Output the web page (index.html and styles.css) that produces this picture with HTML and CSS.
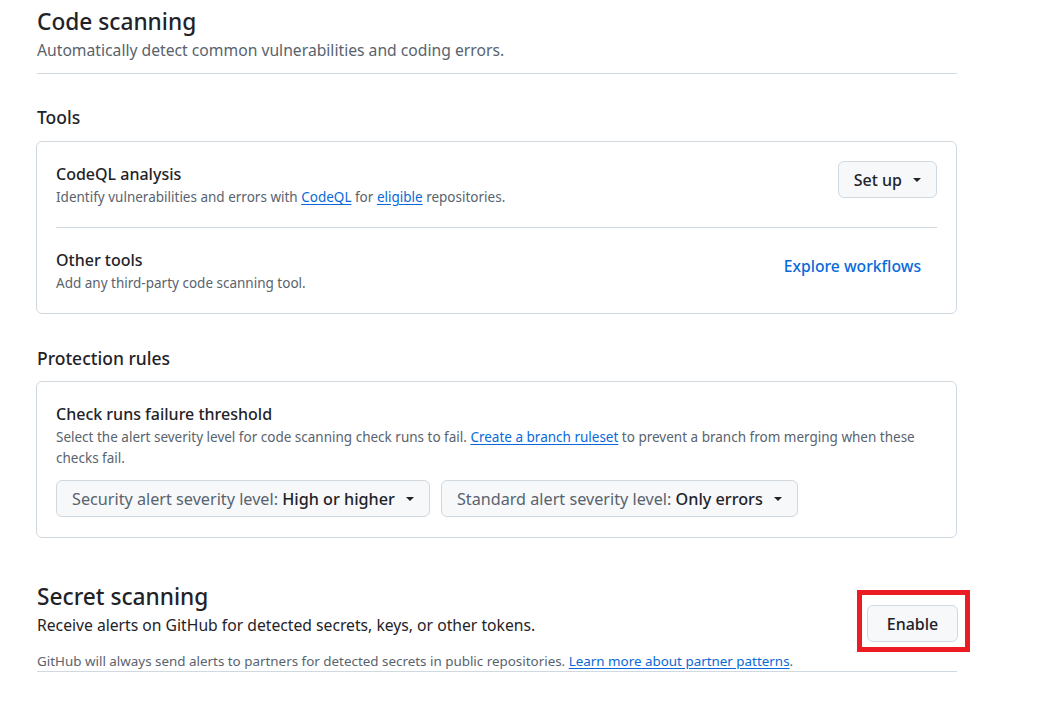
FILE: index.html
```html
<!DOCTYPE html>
<html>
<head>
<meta charset="utf-8">
<link rel="stylesheet" href="styles.css">
</head>
<body>
<main class="page">
  <header class="subhead">
    <h2 class="subhead-title">Code scanning</h2>
    <p class="subhead-desc">Automatically detect common vulnerabilities and coding errors.</p>
  </header>

  <h3 class="section-title tools-title">Tools</h3>
  <section class="box">
    <div class="row">
      <div class="row-text">
        <div class="row-title">CodeQL analysis</div>
        <div class="row-desc">Identify vulnerabilities and errors with <a href="#">CodeQL</a> for <a href="#">eligible</a> repositories.</div>
      </div>
      <button class="btn"><span>Set up</span><span class="caret"></span></button>
    </div>
    <div class="row row-sep">
      <div class="row-text">
        <div class="row-title">Other tools</div>
        <div class="row-desc">Add any third-party code scanning tool.</div>
      </div>
      <button class="btn btn-invisible">Explore workflows</button>
    </div>
  </section>

  <h3 class="section-title prot-title">Protection rules</h3>
  <section class="box box-prot">
    <div class="row-title">Check runs failure threshold</div>
    <div class="row-desc prot-desc">Select the alert severity level for code scanning check runs to fail. <a href="#">Create a branch ruleset</a> to prevent a branch from merging when these checks fail.</div>
    <div class="selects">
      <button class="btn btn-select"><span><span class="muted">Security alert severity level:</span> High or higher</span><span class="caret"></span></button>
      <button class="btn btn-select"><span><span class="muted">Standard alert severity level:</span> Only errors</span><span class="caret"></span></button>
    </div>
  </section>

  <section class="secret">
    <div class="secret-head">
      <div>
        <h2 class="subhead-title">Secret scanning</h2>
        <p class="secret-desc">Receive alerts on GitHub for detected secrets, keys, or other tokens.</p>
      </div>
      <div class="highlight">
        <button class="btn btn-enable">Enable</button>
      </div>
    </div>
    <p class="secret-note">GitHub will always send alerts to partners for detected secrets in public repositories. <a href="#">Learn more about partner patterns</a>.</p>
  </section>
</main>
</body>
</html>
```

FILE: styles.css
```css
* { box-sizing: border-box; }
html, body { margin: 0; padding: 0; background: #fff; }
body {
  font-family: "Noto Sans", "Open Sans", sans-serif;
  color: #1f2328;
}
a { color: #0969da; text-decoration: underline; text-underline-offset: 2px; }

.page {
  width: 920px;
  margin-left: 37px;
  padding-top: 6px;
}

.subhead {
  border-bottom: 1px solid #d1d9e0;
  padding-bottom: 11px;
}
.subhead-title {
  margin: 0;
  font-size: 22.7px;
  font-weight: 500;
  line-height: 32px;
}
.subhead-desc {
  margin: 0;
  font-size: 15.7px;
  color: #59636e;
  line-height: 24px;
}

.section-title {
  margin: 0;
  font-size: 17.5px;
  font-weight: 500;
  line-height: 24px;
}
.tools-title { margin-top: 31px; margin-bottom: 12px; }
.prot-title { margin-top: 32px; margin-bottom: 11px; }

.box {
  border: 1px solid #d1d9e0;
  border-radius: 6px;
  padding: 0 19px;
  margin-left: -1px;
}
.row {
  display: flex;
  align-items: flex-start;
  justify-content: space-between;
  padding: 20px 0 19px;
}
.row-sep { border-top: 1px solid #d1d9e0; padding-top: 20px; padding-bottom: 19px; }
.row-title {
  font-size: 16px;
  font-weight: 500;
  line-height: 24px;
}
.row-desc {
  font-size: 13.5px;
  color: #59636e;
  line-height: 22px;
}
.row .btn { margin-top: -1px; }

.btn {
  font-family: inherit;
  font-size: 16px;
  font-weight: 500;
  color: #1f2328;
  background: #f6f8fa;
  border: 1px solid #d1d9e0;
  border-radius: 6px;
  height: 37px;
  padding: 0 15px;
  display: inline-flex;
  align-items: center;
  gap: 9px;
  white-space: nowrap;
}
.btn-invisible {
  background: transparent;
  border-color: transparent;
  color: #0969da;
  font-size: 15.7px;
}
.caret {
  display: inline-block;
  width: 0; height: 0;
  border-left: 4.5px solid transparent;
  border-right: 4.5px solid transparent;
  border-top: 4.5px solid #1f2328;
  margin-left: 2px;
}

.box-prot { padding-top: 20px; padding-bottom: 20px; }
.prot-desc { line-height: 21px; margin-top: 1px; }
.selects {
  display: flex;
  gap: 11px;
  margin-top: 11px;
}
.btn-select { font-size: 16.2px; padding: 0 15px 0 15px; }
.muted { color: #59636e; font-weight: 400; }

.secret { margin-top: 43px; border-bottom: 1px solid #d1d9e0; }
.secret-head {
  display: flex;
  justify-content: space-between;
  align-items: flex-start;
}
.secret-desc {
  margin: 0;
  font-size: 15.7px;
  line-height: 24px;
}
.highlight {
  margin-top: 9px;
  margin-bottom: -14px;
  margin-right: -13px;
  border: 5px solid #ec1c24;
  padding: 10px 7px 5px 5px;
}
.btn-enable { width: 91px; justify-content: center; }
.secret-note {
  margin: 13px 0 0;
  font-size: 13.4px;
  color: #59636e;
  line-height: 20px;
}
```
